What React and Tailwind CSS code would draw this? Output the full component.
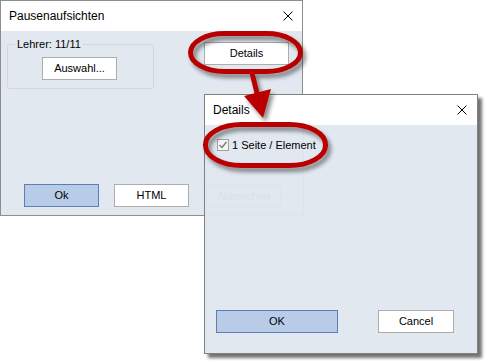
import React from "react";

const font = { fontFamily: '"Liberation Sans", Arial, sans-serif' };

function CloseX() {
  return (
    <svg width="10" height="10" viewBox="0 0 10 10" className="block">
      <path d="M0.5 0.5 L9.5 9.5 M9.5 0.5 L0.5 9.5" stroke="#000" strokeWidth="1" fill="none" />
    </svg>
  );
}

function Btn({ children, className = "" }) {
  return (
    <div className={"h-[23px] flex items-center justify-center text-[11px] text-black " + className}>
      {children}
    </div>
  );
}

export default function App() {
  return (
    <div className="relative w-[487px] h-[363px] bg-white overflow-hidden" style={font}>
      {/* Dialog 1 */}
      <div className="absolute left-0 top-0 w-[303px] h-[216px] border border-[#8e8e8e] bg-[#e1e8f0] flex flex-col">
        <div className="h-[30px] bg-white flex items-center justify-between pl-[8px] pr-[9px] shrink-0">
          <span className="text-[12px] text-black">Pausenaufsichten</span>
          <CloseX />
        </div>
        <div className="flex-1 flex flex-col px-[6px] pt-[11px] pb-[8px]">
          <div className="flex items-start">
            <div className="relative mt-[2px] w-[147px] h-[45px] border border-[#d3d8df] rounded-[3px]">
              <span className="absolute left-[7px] top-[-8px] px-[2px] bg-[#e1e8f0] text-[11px] leading-[14px] text-black">
                Lehrer: 11/11
              </span>
              <Btn className="ml-[34px] mt-[12px] w-[75px] bg-white border border-[#adadad]">Auswahl...</Btn>
            </div>
            <Btn className="ml-[50px] w-[85px] bg-white border border-[#adadad]">Details</Btn>
          </div>
          <div className="mt-auto flex gap-[15px] pl-[17px]">
            <Btn className="w-[75px] bg-[#b8cce8] border border-[#5a7fb6]">Ok</Btn>
            <Btn className="w-[75px] bg-white border border-[#adadad]">HTML</Btn>
          </div>
        </div>
      </div>

      {/* Dialog 2 */}
      <div className="absolute left-[204px] top-[94px] w-[274px] h-[260px] border border-[#808080] bg-[#e1e8f0] flex flex-col shadow-[4px_4px_3px_rgba(0,0,0,0.55)]">
        <div className="h-[30px] bg-white flex items-center justify-between pl-[8px] pr-[10px] shrink-0">
          <span className="text-[12px] text-black">Details</span>
          <CloseX />
        </div>
        <div className="relative flex-1 flex flex-col pl-[12px] pt-[12px] pb-[20px]">
          {/* faint ghost of the window behind */}
          <div className="absolute left-[1px] top-[60px] w-[75px] h-[22px] border border-[#dde4ec] flex items-center justify-center text-[11px] text-[#d9e0e9]">
            Abbrechen
          </div>
          <div className="absolute left-[98px] top-0 w-px h-[90px] bg-[#dce3eb]" />
          <div className="absolute left-0 top-[89px] w-[98px] h-px bg-[#dce3eb]" />

          <div className="relative flex items-center gap-[3px]">
            <div className="w-[12px] h-[12px] border border-[#a0a0a0] bg-[#f4f4f4] flex items-center justify-center">
              <svg width="10" height="10" viewBox="0 0 10 10">
                <path d="M1.5 5 L4 7.5 L8.5 2" stroke="#7a7a7a" strokeWidth="1.4" fill="none" />
              </svg>
            </div>
            <span className="text-[11px] text-black">1 Seite / Element</span>
          </div>
          <div className="relative mt-auto flex gap-[40px] ml-[-1px]">
            <Btn className="w-[122px] bg-[#b8cce8] border border-[#5a7fb6]">OK</Btn>
            <Btn className="w-[76px] bg-white border border-[#adadad]">Cancel</Btn>
          </div>
        </div>
      </div>

      {/* Annotations */}
      <svg className="absolute left-0 top-0 pointer-events-none" width="487" height="363" viewBox="0 0 487 363">
        <defs>
          <filter id="sh" x="-20%" y="-20%" width="140%" height="150%">
            <feDropShadow dx="3" dy="4" stdDeviation="2" floodColor="#000" floodOpacity="0.45" />
          </filter>
        </defs>
        <g filter="url(#sh)">
          <rect x="190.5" y="33.5" width="110" height="38" rx="34" ry="19" fill="none" stroke="#b80000" strokeWidth="5" />
          <rect x="205.5" y="124.5" width="120" height="41" rx="36" ry="20" fill="none" stroke="#b80000" strokeWidth="5" />
          <path d="M252 73 L257.5 95" stroke="#b80000" strokeWidth="5" fill="none" />
          <polygon points="244,96 271,89 263,118" fill="#b80000" />
        </g>
      </svg>
    </div>
  );
}
